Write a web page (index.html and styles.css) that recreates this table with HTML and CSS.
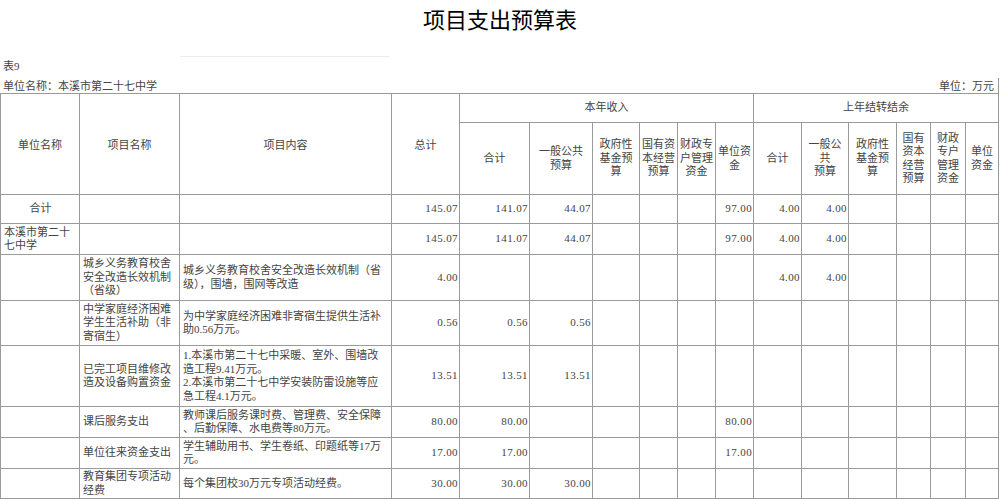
FILE: index.html
```html
<!DOCTYPE html>
<html lang="zh-CN">
<head>
<meta charset="utf-8">
<title>项目支出预算表</title>
<link rel="stylesheet" href="styles.css">
</head>
<body>
<div class="title">项目支出预算表</div>
<div class="rule"></div>
<div class="sheetno">表9</div>
<div class="info">
  <span class="unit-name">单位名称：本溪市第二十七中学</span>
  <span class="unit">单位：万元</span>
</div>
<table class="budget">
  <colgroup>
    <col style="width:79px"><col style="width:100px"><col style="width:212px"><col style="width:68px">
    <col style="width:70px"><col style="width:63px"><col style="width:47px"><col style="width:38px"><col style="width:38px"><col style="width:38px">
    <col style="width:48px"><col style="width:47px"><col style="width:48px"><col style="width:34px"><col style="width:35px"><col style="width:33px">
  </colgroup>
  <thead>
    <tr class="h1">
      <th rowspan="2" class="low">单位名称</th>
      <th rowspan="2" class="low">项目名称</th>
      <th rowspan="2" class="low">项目内容</th>
      <th rowspan="2" class="low">总计</th>
      <th colspan="6">本年收入</th>
      <th colspan="6">上年结转结余</th>
    </tr>
    <tr class="h2">
      <th>合计</th>
      <th>一般公共<br>预算</th>
      <th>政府性<br>基金预<br>算</th>
      <th>国有资<br>本经营<br>预算</th>
      <th>财政专<br>户管理<br>资金</th>
      <th>单位资<br>金</th>
      <th>合计</th>
      <th>一般公<br>共<br>预算</th>
      <th>政府性<br>基金预<br>算</th>
      <th>国有<br>资本<br>经营<br>预算</th>
      <th>财政<br>专户<br>管理<br>资金</th>
      <th>单位<br>资金</th>
    </tr>
  </thead>
  <tbody>
    <tr class="r29">
      <td class="c">合计</td><td></td><td></td>
      <td class="n">145.07</td><td class="n">141.07</td><td class="n">44.07</td><td></td><td></td><td></td><td class="n">97.00</td>
      <td class="n">4.00</td><td class="n">4.00</td><td></td><td></td><td></td><td></td>
    </tr>
    <tr class="r31">
      <td>本溪市第二十七中学</td><td></td><td></td>
      <td class="n">145.07</td><td class="n">141.07</td><td class="n">44.07</td><td></td><td></td><td></td><td class="n">97.00</td>
      <td class="n">4.00</td><td class="n">4.00</td><td></td><td></td><td></td><td></td>
    </tr>
    <tr class="r46">
      <td></td><td>城乡义务教育校舍安全改造长效机制（省级）</td><td>城乡义务教育校舍安全改造长效机制（省<br>级），围墙，围网等改造</td>
      <td class="n">4.00</td><td></td><td></td><td></td><td></td><td></td><td></td>
      <td class="n">4.00</td><td class="n">4.00</td><td></td><td></td><td></td><td></td>
    </tr>
    <tr class="r45">
      <td></td><td>中学家庭经济困难学生生活补助（非寄宿生）</td><td>为中学家庭经济困难非寄宿生提供生活补<br>助0.56万元。</td>
      <td class="n">0.56</td><td class="n">0.56</td><td class="n">0.56</td><td></td><td></td><td></td><td></td>
      <td></td><td></td><td></td><td></td><td></td><td></td>
    </tr>
    <tr class="r61">
      <td></td><td>已完工项目维修改造及设备购置资金</td><td>1.本溪市第二十七中采暖、室外、围墙改<br>造工程9.41万元。<br>2.本溪市第二十七中学安装防雷设施等应<br>急工程4.1万元。</td>
      <td class="n">13.51</td><td class="n">13.51</td><td class="n">13.51</td><td></td><td></td><td></td><td></td>
      <td></td><td></td><td></td><td></td><td></td><td></td>
    </tr>
    <tr class="r31">
      <td></td><td>课后服务支出</td><td>教师课后服务课时费、管理费、安全保障<br>、后勤保障、水电费等80万元。</td>
      <td class="n">80.00</td><td class="n">80.00</td><td></td><td></td><td></td><td></td><td class="n">80.00</td>
      <td></td><td></td><td></td><td></td><td></td><td></td>
    </tr>
    <tr class="r31">
      <td></td><td>单位往来资金支出</td><td>学生辅助用书、学生卷纸、印题纸等17万<br>元。</td>
      <td class="n">17.00</td><td class="n">17.00</td><td></td><td></td><td></td><td></td><td class="n">17.00</td>
      <td></td><td></td><td></td><td></td><td></td><td></td>
    </tr>
    <tr class="r30">
      <td></td><td>教育集团专项活动经费</td><td>每个集团校30万元专项活动经费。</td>
      <td class="n">30.00</td><td class="n">30.00</td><td class="n">30.00</td><td></td><td></td><td></td><td></td>
      <td></td><td></td><td></td><td></td><td></td><td></td>
    </tr>
  </tbody>
</table>
</body>
</html>
```
FILE: styles.css
```css
html, body {
  margin: 0;
  padding: 0;
  background: #fff;
}
body {
  font-family: "Liberation Serif", "Noto Sans CJK SC", serif;
  font-size: 11px;
  color: #444;
}
.title {
  height: 42px;
  line-height: 42px;
  text-align: center;
  font-size: 22px;
  color: #000;
}
.rule {
  margin: 14px 0 0 180px;
  width: 210px;
  border-top: 1px solid #ececec;
}
.sheetno {
  margin-top: 1px;
  height: 16px;
  line-height: 16px;
  padding-left: 3px;
}
.info {
  display: flex;
  justify-content: space-between;
  height: 19px;
  line-height: 16px;
  padding: 4px 0 0 3px;
  box-sizing: border-box;
}
.unit {
  padding-right: 4px;
  border-right: 1px solid #999;
  margin-right: 1px;
}
.budget {
  border-collapse: collapse;
  table-layout: fixed;
  width: 999px;
}
.budget th, .budget td {
  border: 1px solid #9a9a9a;
  padding: 0 2px 0 3px;
  line-height: 13.5px;
  font-weight: normal;
  vertical-align: middle;
  text-align: left;
  white-space: nowrap;
  overflow: hidden;
}
.budget tbody td:nth-child(-n+2) {
  white-space: normal;
  word-break: break-all;
  line-break: anywhere;
}
.budget th {
  text-align: center;
  padding: 0 1px;
}
.budget th.low {
  padding-top: 3px;
}
.budget td.c {
  text-align: center;
}
.budget td.n {
  text-align: right;
  letter-spacing: 0.4px;
  padding-right: 1px;
}
.h1 { height: 29px; }
.h2 { height: 72px; }
.r29 { height: 29px; }
.r30 { height: 30px; }
.r31 { height: 31px; }
.r45 { height: 45px; }
.r46 { height: 46px; }
.r61 { height: 61px; }
```
